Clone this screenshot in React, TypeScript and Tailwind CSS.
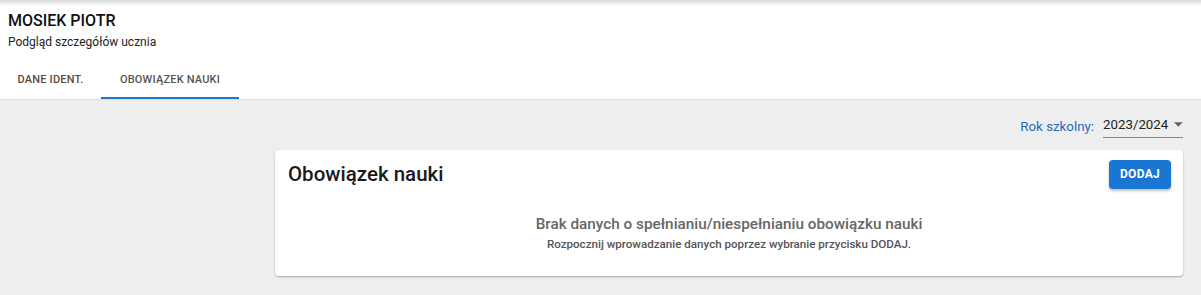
// Student details — "Obowiązek nauki" tab

const tabs = [
  { label: "DANE IDENT.", width: "w-[101px]", active: false },
  { label: "OBOWIĄZEK NAUKI", width: "w-[138px]", active: true },
];

export default function App() {
  return (
    <div className="min-h-[295px] w-full bg-[#eeeeee] font-['Roboto','Liberation_Sans',sans-serif] text-[#212121]">
      <header className="relative border-b border-[#dddddd] bg-white">
        <div className="pointer-events-none absolute inset-x-0 top-0 h-[6px] bg-gradient-to-b from-[#d9d9d9] to-white"></div>
        <div className="px-2 pt-[11px]">
          <h1 className="text-[16px] font-medium leading-[19px] text-[#111111]">MOSIEK PIOTR</h1>
          <p className="mt-[5px] text-[12px] leading-[15px] text-[#222222]">Podgląd szczegółów ucznia</p>
        </div>
        <nav className="mt-[11px] flex">
          {tabs.map((tab) => (
            <button
              key={tab.label}
              type="button"
              className={`${tab.width} flex h-[38px] items-center justify-center border-b-2 pt-[3px] text-[11px] font-medium tracking-[0.2px] ${
                tab.active ? "border-[#1976d2] text-[#555555]" : "border-transparent text-[#5a4a3f]"
              }`}
            >
              {tab.label}
            </button>
          ))}
        </nav>
      </header>

      <main className="px-[18px] pt-[15px]">
        <div className="flex items-center justify-end gap-[9px] text-[13.3px]">
          <span className="text-[#1e6bc4]">Rok szkolny:</span>
          <div className="flex w-[80px] items-center border-b border-[#8a8a8a] pb-[2px]">
            <span className="text-[#222222]">2023/2024</span>
            <svg width="9" height="5" viewBox="0 0 10 5" className="ml-[6px] text-[#666666]">
              <path d="M0 0 L10 0 L5 5 Z" fill="currentColor" />
            </svg>
          </div>
        </div>

        <div className="ml-[257px] mt-[12px] rounded-[4px] bg-white px-[12px] pb-[25px] pt-[10px] shadow-[0_1px_2px_rgba(0,0,0,0.3)]">
          <div className="flex items-start justify-between">
            <h2 className="mt-[2px] pl-[1px] text-[20.5px] font-medium leading-[24px] text-[#1a1a1a]">Obowiązek nauki</h2>
            <button
              type="button"
              className="h-[29px] rounded-[4px] bg-[#1976d2] px-[11px] text-[12px] font-bold tracking-[0.3px] text-white shadow-[0_2px_3px_rgba(0,0,0,0.25)]"
            >
              DODAJ
            </button>
          </div>
          <div className="mt-[25px] text-center">
            <p className="text-[15.3px] font-medium leading-[20px] text-[#666666]">
              Brak danych o spełnianiu/niespełnianiu obowiązku nauki
            </p>
            <p className="mt-[3px] text-[11.6px] font-medium leading-[14px] text-[#555555]">
              Rozpocznij wprowadzanie danych poprzez wybranie przycisku DODAJ.
            </p>
          </div>
        </div>
      </main>
    </div>
  );
}
